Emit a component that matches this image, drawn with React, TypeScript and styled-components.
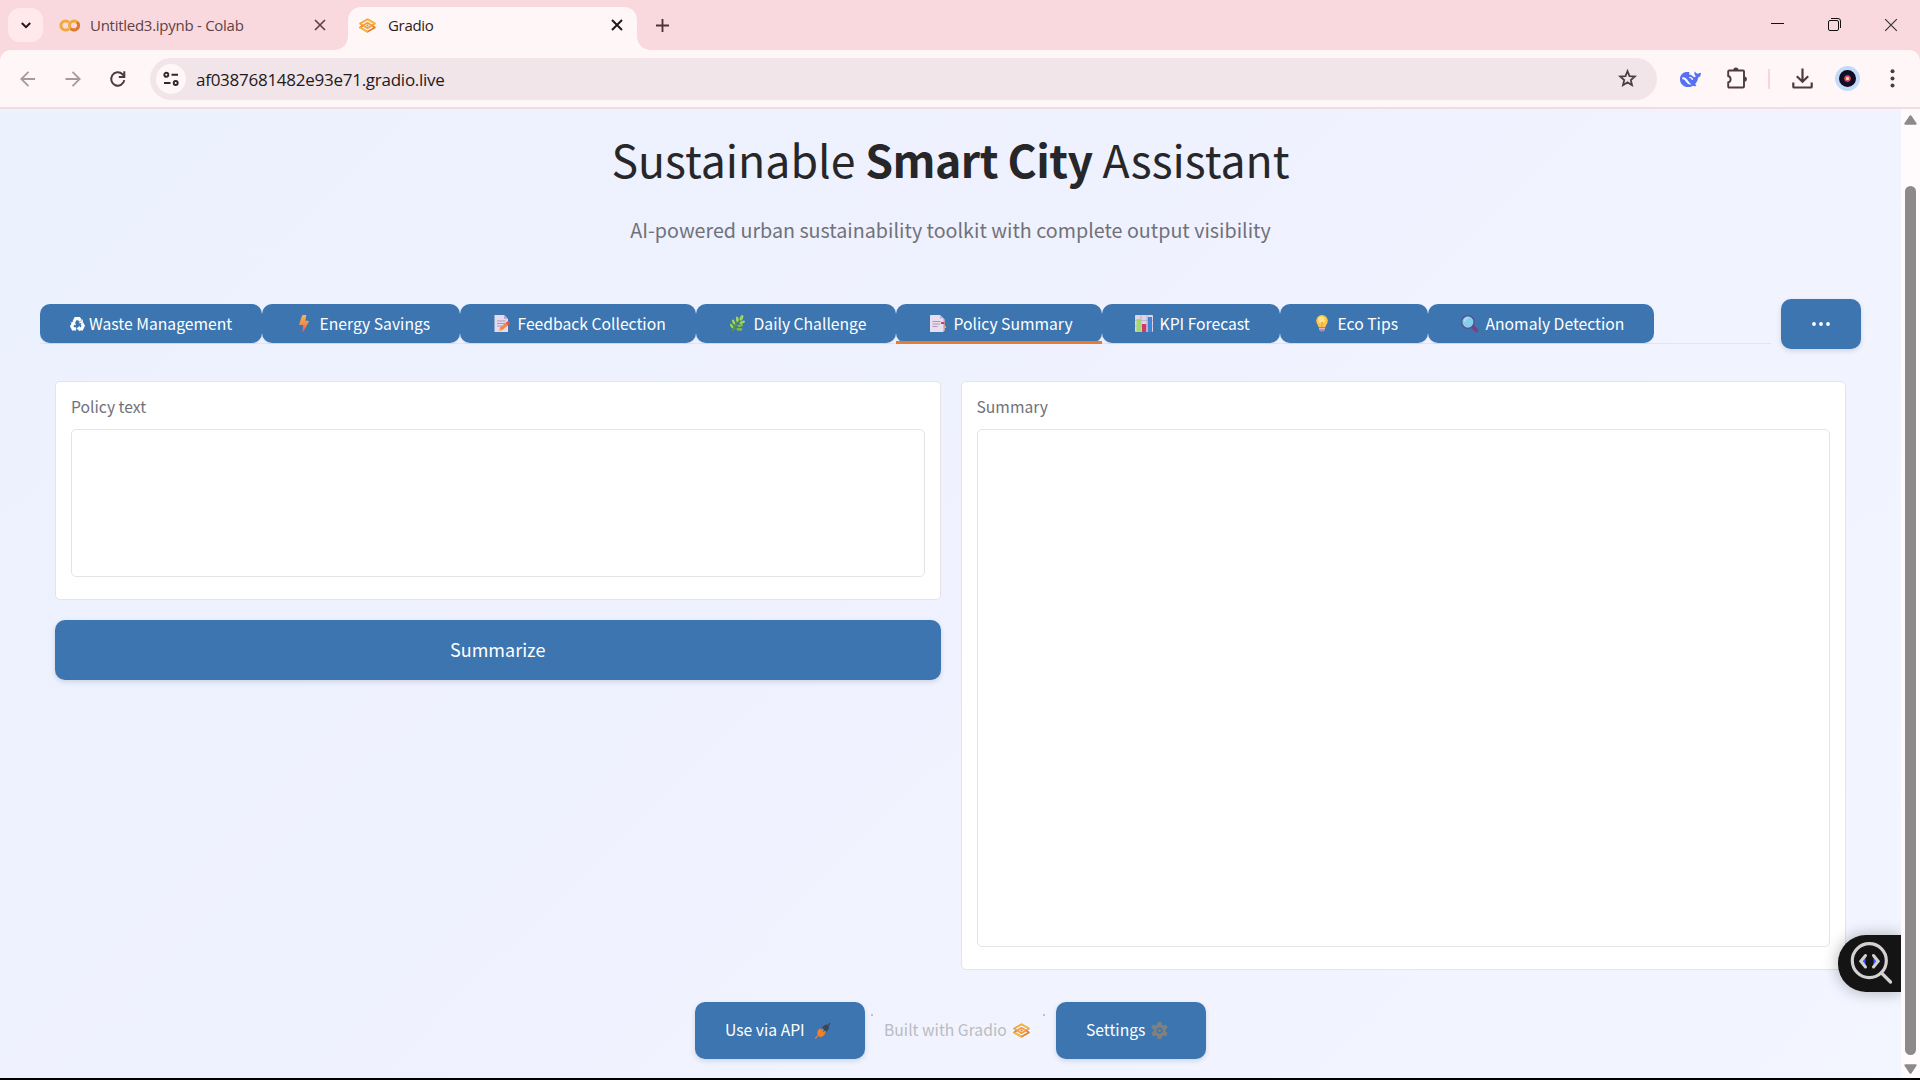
import React from "react";
import styled, { createGlobalStyle } from "styled-components";

const sans = `"Noto Sans CJK SC", "Open Sans", sans-serif`;
const ui = `"Open Sans", "Noto Sans", sans-serif`;

const GlobalStyle = createGlobalStyle`
  * { box-sizing: border-box; }
  html, body { margin: 0; padding: 0; background: #000; overflow: hidden; }
  body { font-family: ${sans}; }
  button { font: inherit; border: 0; padding: 0; margin: 0; background: none; color: inherit; }
  svg { display: block; flex: none; overflow: visible; }
`;

const Window = styled.div`
  width: 1920px;
  height: 1080px;
  padding-bottom: 2px;
  display: flex;
  flex-direction: column;
  background: #000;
`;

/* ---------- browser chrome ---------- */

const TabStrip = styled.div`
  flex: none;
  height: 50px;
  background: #fad9de;
  display: flex;
  align-items: flex-end;
  padding-left: 8px;
`;

const SearchTabs = styled.button`
  width: 35px;
  height: 34px;
  margin-bottom: 8px;
  border-radius: 12px;
  background: #ffe9ec;
  display: grid;
  place-items: center;
`;

const BrowserTab = styled.div<{ $active?: boolean; $width: number }>`
  width: ${(p) => p.$width}px;
  height: 43px;
  padding: 0 ${(p) => (p.$active ? 14 : 22)}px 7px ${(p) => (p.$active ? 11 : 17)}px;
  border-radius: 13px 13px 0 0;
  background: ${(p) => (p.$active ? "#fff6f7" : "transparent")};
  color: ${(p) => (p.$active ? "#2b1d20" : "#5c4347")};
  display: flex;
  align-items: center;
  gap: ${(p) => (p.$active ? 12 : 10)}px;
  position: relative;
  ${(p) =>
    p.$active &&
    `&::before, &::after {
      content: "";
      position: absolute;
      bottom: 0;
      width: 13px;
      height: 13px;
    }
    &::before { left: -13px; background: radial-gradient(circle at 0 0, transparent 12.5px, #fff6f7 13px); }
    &::after { right: -13px; background: radial-gradient(circle at 100% 0, transparent 12.5px, #fff6f7 13px); }`}
`;

const Text = styled.span<{ $size: number; $ls?: number; $ui?: boolean }>`
  font-family: ${(p) => (p.$ui ? ui : sans)};
  font-size: ${(p) => p.$size}px;
  letter-spacing: ${(p) => p.$ls ?? 0}px;
  line-height: 24px;
  white-space: pre;
`;

const TabTitle = styled(Text)`
  flex: 1;
`;

const NewTab = styled.button`
  width: 24px;
  height: 24px;
  margin: 0 0 13px 13px;
  display: grid;
  place-items: center;
`;

const WindowButtons = styled.div`
  margin-left: auto;
  height: 50px;
  padding: 0 22px 1px 0;
  display: flex;
  align-items: center;
  gap: 43.5px;
`;

const ToolbarBack = styled.div`
  flex: none;
  background: #fad9de;
`;

const Toolbar = styled.div`
  height: 59px;
  padding: 0 20px;
  border-radius: 11px 11px 0 0;
  border-bottom: 2px solid #f3dce0;
  background: #fff6f7;
  display: flex;
  align-items: center;
`;

const NavButtons = styled.div`
  width: 130px;
  display: flex;
  gap: 29px;
`;

const AddressBar = styled.div`
  width: 1507px;
  height: 42px;
  border-radius: 21px;
  background: #f1e5e9;
  display: flex;
  align-items: center;
  padding: 0 20px 0 6px;
`;

const SiteInfo = styled.button`
  width: 30px;
  height: 30px;
  border-radius: 50%;
  background: #fff6f7;
  display: grid;
  place-items: center;
`;

const Url = styled(Text)`
  flex: 1;
  margin-left: 10px;
  padding-top: 2px;
  color: #22191b;
`;

const Extensions = styled.div`
  flex: 1;
  padding-left: 23px;
  display: flex;
  align-items: center;
`;

const PuzzleSlot = styled.div`
  margin-left: 26px;
`;

const Divider = styled.i`
  width: 2px;
  height: 20px;
  margin: 0 22px 0 21px;
  background: #fad4da;
`;

const Avatar = styled.div`
  width: 25px;
  height: 25px;
  margin: 0 30px 0 22px;
  border-radius: 50%;
  border: 4px solid #c3dbf8;
  background: radial-gradient(circle, #ffd98a 0 1.2px, #e0456a 2px 2.8px, #14102a 3.8px, #07061a 100%);
`;

/* ---------- page ---------- */

const Viewport = styled.div`
  flex: 1;
  min-height: 0;
  display: flex;
`;

const Page = styled.main`
  width: 1901px;
  position: relative;
  background: linear-gradient(135deg, #ebf1fd 0%, #eff2fe 45%, #f1f4ff 65%, #f3f6ff 100%);
  display: flex;
  flex-direction: column;
`;

const ScrollBar = styled.div`
  width: 19px;
  background: #fffafb;
  display: flex;
  flex-direction: column;
  align-items: center;
  padding: 6px 0 4px 0;
`;

const Thumb = styled.div`
  width: 11px;
  height: 869px;
  margin: 61px 0 9px;
  border-radius: 6px;
  background: #8c898a;
`;

const Header = styled.header`
  height: 190px;
  display: flex;
  flex-direction: column;
  align-items: center;
  color: #27272a;
`;

const Title = styled.h1`
  margin: 20px 0 0;
  height: 60px;
  font-size: 44.6px;
  line-height: 60px;
  font-weight: 400;
  white-space: pre;
`;

const Strong = styled.strong`
  font-weight: 600;
  letter-spacing: -0.55px;
`;

const Subtitle = styled.p`
  margin: 26px 0 0;
  height: 30px;
  font-size: 19.7px;
  line-height: 30px;
  color: #71717a;
`;

const TabRow = styled.div`
  height: 50px;
  padding: 0 40px;
  display: flex;
  align-items: center;
  justify-content: space-between;
`;

const TabList = styled.div`
  width: 1731px;
  height: 40px;
  border-bottom: 1px solid #e4e4e9;
  display: flex;
`;

const Tab = styled.button<{ $width: number; $selected?: boolean }>`
  width: ${(p) => p.$width}px;
  height: 39px;
  padding-left: 30px;
  border-radius: 10px;
  background: #3c75b0;
  color: #fff;
  display: flex;
  align-items: center;
  position: relative;
  box-shadow: 0 1px 2px rgba(40, 60, 110, 0.1);
  clip-path: inset(0 0 -1px 0);
  ${(p) =>
    p.$selected &&
    `&::after {
      content: "";
      position: absolute;
      left: 0;
      right: 0;
      bottom: -1px;
      height: 3px;
      background: #ea7a2e;
    }`}
`;

const Emoji = styled.span<{ $width: number }>`
  width: ${(p) => p.$width}px;
  padding-right: 4px;
  display: grid;
  place-items: center;
`;

const ButtonLabel = styled(Text)`
  padding-bottom: 2px;
`;

const Button = styled.button<{ $width?: number; $height: number }>`
  width: ${(p) => (p.$width ? p.$width + "px" : "100%")};
  height: ${(p) => p.$height}px;
  border-radius: 10px;
  background: #3c75b0;
  color: #fff;
  box-shadow: 0 2px 5px rgba(30, 50, 90, 0.16);
  display: flex;
  align-items: center;
  justify-content: center;
`;

const FooterButton = styled(Button)<{ $gap: number }>`
  justify-content: flex-start;
  padding-left: 30px;
  gap: ${(p) => p.$gap}px;
`;

const Columns = styled.div`
  padding: 32px 55px 0;
  display: flex;
  align-items: flex-start;
  gap: 20px;
`;

const Column = styled.div`
  flex: 1;
  display: flex;
  flex-direction: column;
  gap: 20px;
`;

const Panel = styled.section<{ $height: number }>`
  height: ${(p) => p.$height}px;
  padding: 13px 15px 22px;
  border: 1px solid #e4e4e7;
  border-radius: 5px;
  background: #fff;
  color: #71717a;
  display: flex;
  flex-direction: column;
`;

const Field = styled.div`
  flex: 1;
  margin-top: 10px;
  border: 1px solid #e4e4e7;
  border-radius: 5px;
`;

const Footer = styled.footer`
  margin-top: 32px;
  height: 57px;
  display: flex;
  justify-content: center;
`;

const FooterDot = styled.i<{ $before: number; $after: number }>`
  width: 2px;
  height: 2px;
  margin: 12px ${(p) => p.$after}px 0 ${(p) => p.$before}px;
  background: #c0c0c6;
`;

const BuiltWith = styled.div`
  width: 146px;
  color: #bbbbc1;
  display: flex;
  align-items: center;
  justify-content: space-between;
`;

const Inspector = styled.div`
  position: absolute;
  right: 0;
  top: 826px;
  width: 63px;
  height: 57px;
  padding: 7px 0 0 12px;
  border-radius: 28px 0 0 28px;
  background: #141414;
  box-shadow: 0 0 16px rgba(0, 0, 0, 0.3);
`;

const Clip = styled.div`
  position: absolute;
  inset: 0;
  overflow: hidden;
  pointer-events: none;
`;

/* ---------- drawings ---------- */

const GradioLogo = ({ w, h }: { w: number; h: number }) => (
  <svg width={w} height={h} viewBox="0 0 20 18" fill="none" strokeLinejoin="round" preserveAspectRatio="none">
    <path d="M4.600 8.900 1.300 6.700 10 1.500l8.700 5.200-3.300 2.200" stroke="#f0a63a" strokeWidth="2.200" />
    <path d="M4.600 9.100 1.300 11.300 10 16.500l8.700-5.200-3.300-2.200" stroke="#e9822e" strokeWidth="2.200" />
    <path d="M1.300 11.300 10 16.500M10 1.500l8.700 5.200" stroke="#f3bb45" strokeWidth="2.200" />
    <path d="M4.800 9 10 5.800 15.200 9 10 12.200z" stroke="#f0a03a" strokeWidth="2" />
    <circle cx="10" cy="9" r="1.300" fill="#e9822e" />
  </svg>
);

const Cross = ({ size, color, width }: { size: number; color: string; width: number }) => (
  <svg width={size} height={size} viewBox="0 0 12 12" fill="none" stroke={color} strokeWidth={width}>
    <path d="M1 1l10 10M11 1 1 11" />
  </svg>
);

const Recycle = () => (
  <svg width="15" height="15" viewBox="0 0 24 24" fill="none" stroke="#fff" strokeWidth="5">
    <path d="M6.2 9.4 9 4.2h5.5l2.3 3.6" />
    <path d="M19 11.5l2.2 4-2.4 5h-4.6" />
    <path d="M9.8 20.5H5l-2.2-4 2.4-4.3" />
    <path d="M20.5 5v6.6h-6.8zM15.6 15.5v9l-5-4.4zM.8 10.8 7.6 8l1.8 7z" fill="#fff" stroke="none" />
  </svg>
);

const Bolt = () => (
  <svg width="10" height="17" viewBox="0 0 10 17">
    <defs>
      <linearGradient id="bolt" x1="0" y1="0" x2="0" y2="1">
        <stop offset="0" stopColor="#f9b84a" />
        <stop offset="0.55" stopColor="#f08a4c" />
        <stop offset="1" stopColor="#e4536a" />
      </linearGradient>
    </defs>
    <path d="M3 .8Q3.300 0 4 0h2.700q.8 0 .6.800L6.300 5.800h2.900q1 0 .6 1L4.600 16.500q-.4.700-.9.400-.5-.2-.3-.9L4.300 10H.8Q-.1 10 .1 9.200z" fill="url(#bolt)" />
  </svg>
);

const Memo = () => (
  <svg width="16" height="17" viewBox="0 0 16 17">
    <path d="M.5 0H10l4 4v13H.5z" fill="#e6dbee" />
    <path d="M10 0l4 4h-4z" fill="#bcaacb" />
    <path d="M3 6h8.500M3 8.500h8M3 11h5" stroke="#a997ba" strokeWidth="1" />
    <path d="M4.500 16.200l1-3.200 6-5 2.300 2.500-6 5z" fill="#ef8a45" />
    <path d="M11.500 8l1.700-1.400q1.300-.7 2.200.4t-.1 2.200l-1.500 1.300z" fill="#e4545c" />
    <path d="M4.500 16.200l1-3.200 2.300 2.500z" fill="#f3c08b" />
  </svg>
);

const Herb = () => (
  <svg width="15" height="17" viewBox="0 0 15 17">
    <path d="M2.500 16.500Q4.500 9 12 2M4 12.500l-2-3M5 11l3-.5M4 14l6-1" stroke="#5d9b3c" strokeWidth="1.200" fill="none" />
    <g fill="#a5d653">
      <ellipse cx="11.500" cy="2.800" rx="1.600" ry="3" transform="rotate(25 11.500 2.800)" />
      <ellipse cx="7.300" cy="4.200" rx="1.400" ry="2.800" transform="rotate(-8 7.300 4.200)" />
      <ellipse cx="3.600" cy="7" rx="1.300" ry="2.700" transform="rotate(-25 3.600 7)" />
      <ellipse cx="12.300" cy="7.200" rx="2.900" ry="1.400" transform="rotate(-20 12.300 7.200)" />
      <ellipse cx="1.600" cy="11" rx="1.200" ry="2.500" transform="rotate(-30 1.600 11)" />
    </g>
    <g fill="#80bd42">
      <ellipse cx="10.300" cy="10.500" rx="2.900" ry="1.400" transform="rotate(-12 10.300 10.500)" />
      <ellipse cx="9.500" cy="14.400" rx="3" ry="1.400" />
    </g>
  </svg>
);

const BookmarkTabs = () => (
  <svg width="16" height="17" viewBox="0 0 16 17">
    <path d="M3 1h8l4 3.500V16H3z" fill="#b39fbf" />
    <path d="M0 .5Q0 0 .5 0H10l3.500 3.500V17H.5Q0 17 0 16.500z" fill="#e9def0" />
    <path d="M10 0l3.500 3.500H10z" fill="#c2b2d0" />
    <path d="M2.500 6.500h8M2.500 9h7.500M2.500 11.500h5" stroke="#a997ba" strokeWidth="1" />
    <path d="M11 7h3.300v2H11z" fill="#d6386f" />
    <path d="M13.500 11H16v2h-2.500z" fill="#e9b13a" />
  </svg>
);

const Chart = () => (
  <svg width="18" height="17" viewBox="0 0 18 17">
    <rect width="18" height="17" rx="1" fill="#dfd3e6" />
    <path d="M0 5.500h18M0 11h18M6 0v17M12 0v17" stroke="#b9a9c6" strokeWidth=".8" />
    <rect x="1.500" y="4" width="4.200" height="13" fill="#9fdc63" />
    <rect x="7" y="9" width="4.200" height="8" fill="#cf3a68" />
    <rect x="12.800" y="2" width="4.200" height="15" fill="#3f86d8" />
  </svg>
);

const Bulb = () => (
  <svg width="12" height="17" viewBox="0 0 12 17">
    <path d="M6 0a5.700 5.700 0 0 1 5.800 5.800c0 2.700-1.700 3.600-2.400 6.400H2.600C1.900 9.400.2 8.500.2 5.800A5.700 5.700 0 0 1 6 0z" fill="#fbc54a" />
    <ellipse cx="5.600" cy="5" rx="3.300" ry="3.500" fill="#fde68a" />
    <path d="M5 7l1 1.500L7 7M6 8.500v3.500" stroke="#ef9a3a" strokeWidth="1" fill="none" />
    <path d="M3 12.200h6v2.600L7.800 16.500H4.200L3 14.800z" fill="#a88bb5" />
    <path d="M3 13.700h6" stroke="#d7c7dd" strokeWidth="1" />
  </svg>
);

const Glass = () => (
  <svg width="17" height="17" viewBox="0 0 17 17">
    <path d="M10.500 10.500l5 5" stroke="#7d3f7e" strokeWidth="3.400" strokeLinecap="round" />
    <ellipse cx="6.900" cy="7" rx="6.200" ry="6.300" fill="#84d0ea" stroke="#5a4a8e" strokeWidth="1.300" />
    <path d="M3.500 6Q4.200 3.300 7 3" stroke="#b5e8f6" strokeWidth="1.200" fill="none" strokeLinecap="round" />
  </svg>
);

const Plug = () => (
  <svg width="15" height="16" viewBox="0 0 15 16">
    <path d="M7 4.500l2.500-2.300q2-1.300 3.700.2t.3 3.800L11 9z" fill="#3f4551" />
    <path d="M13 2.600 15 .3" stroke="#3f4551" strokeWidth="1.300" />
    <path d="M2.800 7.500 5 5.300l5.300 5.500-2.500 2.400q-2.300 1.500-4.300-.2t-.7-5.500z" fill="#f07f2e" />
    <path d="M2.800 12.600.3 15.600M6.300 8l2-2M8.500 10.200l2-2" stroke="#f07f2e" strokeWidth="1.300" />
  </svg>
);

const Gear = () => (
  <svg width="17" height="17" viewBox="0 0 24 24" fill="#808080" fillRule="evenodd">
    <path d="M9.300 0h5.400l.6 3.700 2 1.100L20.900 3.500l2.700 4.700-3 2.400v2.800l3 2.400-2.700 4.700-3.600-1.300-2 1.100-.6 3.700H9.300l-.6-3.700-2-1.100-3.600 1.300-2.700-4.700 3-2.400v-2.800l-3-2.400 2.700-4.700 3.600 1.300 2-1.100zM12 7.600a4.400 4.400 0 1 0 0 8.800 4.400 4.400 0 0 0 0-8.800zm0 2.200a2.200 2.200 0 1 1 0 4.400 2.200 2.200 0 0 1 0-4.400z" />
  </svg>
);

const Whale = () => (
  <svg width="21" height="16" viewBox="0 0 21 16">
    <path d="M9.500 1.200C4 .2 0 3 0 8.200 0 12.800 3.500 16 8 16c2.200 0 3.800-.6 4.900-1.300 1.500.6 2.700.5 3.500.1-.4-.8-.9-1.200-1.300-1.800 1.900-1.800 2.800-4.200 2.900-6.200C20 6 21 4.200 20.900 1.700 19.600 1.300 18.300 3 17.300 2.700 16.300 2.300 15.600 1.500 14.700.2c-.7 2-.3 3.700 1.100 5.100-.9 1.300-1.900.9-2.600.2C11.500 4 10.500 3.300 9 3.400" fill="#5570f2" />
    <path d="M2.300 6.200c2.600-.4 4.300 1.300 5.600 3.300 1.200 1.900 2.200 3.200 3.700 3.700-2 .9-3.700.1-5-1.600C5.300 9.900 4.600 8 2.300 8.300z" fill="#fff6f7" />
    <path d="M9.300 6.300c1.700 0 3 1 3.300 2.600" stroke="#fff6f7" strokeWidth="1.300" fill="none" />
  </svg>
);

const tabs = [
  { icon: <Recycle />, slot: 19, label: "Waste Management", width: 222 },
  { icon: <Bolt />, slot: 27.5, label: "Energy Savings", width: 198 },
  { icon: <Memo />, slot: 27.5, label: "Feedback Collection", width: 236 },
  { icon: <Herb />, slot: 27.5, label: "Daily Challenge", width: 200 },
  { icon: <BookmarkTabs />, slot: 27.5, label: "Policy Summary", width: 206, selected: true },
  { icon: <Chart />, slot: 27.5, label: "KPI Forecast", width: 178 },
  { icon: <Bulb />, slot: 27.5, label: "Eco Tips", width: 148 },
  { icon: <Glass />, slot: 27.5, label: "Anomaly Detection", width: 226 },
];

export default function App() {
  return (
    <>
      <GlobalStyle />
      <Window>
        <TabStrip>
          <SearchTabs>
            <svg width="10" height="7" viewBox="0 0 10 7" fill="none" stroke="#22191b" strokeWidth="2">
              <path d="M.8 1 5 5.200 9.200 1" />
            </svg>
          </SearchTabs>
          <BrowserTab $width={305}>
            <svg width="20" height="13" viewBox="0 0 20 13" fill="none" strokeWidth="3">
              <path d="M8.800 3.300A4.600 4.600 0 1 0 8.800 9.700" stroke="#f0a93b" />
              <circle cx="14" cy="6.500" r="4.500" stroke="#f0a93b" />
              <path d="M10.800 9.700A4.500 4.500 0 0 0 17.200 3.300" stroke="#dd7636" />
            </svg>
            <TabTitle $ui $size={15} $ls={-0.27}>Untitled3.ipynb - Colab</TabTitle>
            <Cross size={12} color="#5c4347" width={1.7} />
          </BrowserTab>
          <BrowserTab $active $width={289}>
            <GradioLogo w={17} h={15} />
            <TabTitle $ui $size={15} $ls={-0.3}>Gradio</TabTitle>
            <Cross size={12} color="#22191b" width={2} />
          </BrowserTab>
          <NewTab>
            <svg width="13" height="13" viewBox="0 0 14 14" stroke="#4a3438" strokeWidth="2">
              <path d="M7 0v14M0 7h14" />
            </svg>
          </NewTab>
          <WindowButtons>
            <svg width="13" height="13" viewBox="0 0 13 13" stroke="#111" strokeWidth="1">
              <path d="M0 5.500h13" />
            </svg>
            <svg width="13" height="13" viewBox="0 0 13 13" fill="none" stroke="#111" strokeWidth="1">
              <rect x=".5" y="2.500" width="10" height="10" rx="1.500" />
              <path d="M3 .5h7a2.500 2.500 0 0 1 2.500 2.500v7" />
            </svg>
            <Cross size={14} color="#333" width={1} />
          </WindowButtons>
        </TabStrip>

        <ToolbarBack>
          <Toolbar>
            <NavButtons>
              <svg width="16" height="16" viewBox="0 0 16 16" fill="none" stroke="#a8999c" strokeWidth="1.800">
                <path d="M8.500.8 1.300 8l7.200 7.200M1.500 8H15" />
              </svg>
              <svg width="16" height="16" viewBox="0 0 16 16" fill="none" stroke="#a8999c" strokeWidth="1.800">
                <path d="M7.500.8 14.700 8l-7.200 7.200M14.500 8H.5" />
              </svg>
              <svg width="16" height="16" viewBox="0 0 16 16" fill="none" stroke="#4f3b3f" strokeWidth="2">
                <path d="M14.300 9.200A6.600 6.800 0 1 1 12.500 3.200L14.300 5.400M14.300 .2v5.800H8.800" />
              </svg>
            </NavButtons>
            <AddressBar>
              <SiteInfo>
                <svg width="16" height="14" viewBox="0 0 16 14" fill="none" stroke="#33272a" strokeWidth="1.900">
                  <circle cx="3.300" cy="2.800" r="2" />
                  <path d="M8.500 2.800H15M1 11h6.500" />
                  <circle cx="12.700" cy="11" r="2" />
                </svg>
              </SiteInfo>
              <Url $ui $size={17} $ls={-0.26}>af0387681482e93e71.gradio.live</Url>
              <svg width="19" height="19" viewBox="0 0 19 19" fill="none" stroke="#4f3f43" strokeWidth="1.800">
                <path d="M9.500 2.200l2 4.900 5.300.4-4 3.500 1.200 5.200-4.500-2.800L5 16.200 6.200 11l-4-3.500 5.300-.4z" />
              </svg>
            </AddressBar>
            <Extensions>
              <Whale />
              <PuzzleSlot>
                <svg width="20" height="21" viewBox="0 0 20 21" fill="none" stroke="#4f3b3f" strokeWidth="1.900">
                  <path d="M1.200 3.500q0-1 1-1H16q1 0 1 1V18.500q0 1-1 1H2.200q-1 0-1-1V14.500a3.400 3.400 0 0 0 0-6.500z" />
                  <path d="M6.300 2.200a2.600 2.600 0 0 1 5.200 0zM17.300 8.500a2.600 2.600 0 0 1 0 5.200z" fill="#4f3b3f" stroke="none" />
                </svg>
              </PuzzleSlot>
              <Divider />
              <svg width="21" height="21" viewBox="0 0 21 21" fill="none" stroke="#4f3b3f" strokeWidth="2.200">
                <path d="M10.500.5v13M4.800 8.200l5.700 5.600 5.700-5.600" />
                <path d="M1.300 14.500v4.200q0 .8.800.8h16.800q.8 0 .8-.8v-4.200" />
              </svg>
              <Avatar />
              <svg width="5" height="19" viewBox="0 0 5 19" fill="#4f3b3f">
                <circle cx="2.500" cy="2.200" r="2" />
                <circle cx="2.500" cy="9.500" r="2" />
                <circle cx="2.500" cy="16.500" r="2" />
              </svg>
            </Extensions>
          </Toolbar>
        </ToolbarBack>

        <Viewport>
          <Page>
            <Header>
              <Title>Sustainable <Strong>Smart City</Strong> Assistant</Title>
              <Subtitle>AI-powered urban sustainability toolkit with complete output visibility</Subtitle>
            </Header>
            <TabRow>
              <TabList>
                {tabs.map((t) => (
                  <Tab key={t.label} $width={t.width} $selected={t.selected}>
                    <Emoji $width={t.slot}>{t.icon}</Emoji>
                    <Text $size={15.7}>{t.label}</Text>
                  </Tab>
                ))}
              </TabList>
              <Button $width={80} $height={50}>
                <svg width="18" height="4" viewBox="0 0 18 4" fill="#fff">
                  <circle cx="2" cy="2" r="1.900" />
                  <circle cx="9" cy="2" r="1.900" />
                  <circle cx="16" cy="2" r="1.900" />
                </svg>
              </Button>
            </TabRow>
            <Columns>
              <Column>
                <Panel $height={219}>
                  <Text $size={15.7}>Policy text</Text>
                  <Field />
                </Panel>
                <Button $height={60}>
                  <ButtonLabel $size={18}>Summarize</ButtonLabel>
                </Button>
              </Column>
              <Column>
                <Panel $height={589}>
                  <Text $size={15.7}>Summary</Text>
                  <Field />
                </Panel>
              </Column>
            </Columns>
            <Footer>
              <FooterButton $width={170} $height={57} $gap={10}>
                <ButtonLabel $size={15.7}>Use via API</ButtonLabel>
                <Plug />
              </FooterButton>
              <FooterDot $before={6} $after={11} />
              <BuiltWith>
                <ButtonLabel $size={15.7}>Built with Gradio</ButtonLabel>
                <GradioLogo w={17} h={15} />
              </BuiltWith>
              <FooterDot $before={13} $after={11} />
              <FooterButton $width={150} $height={57} $gap={6}>
                <ButtonLabel $size={15.7}>Settings</ButtonLabel>
                <Gear />
              </FooterButton>
            </Footer>
            <Clip>
              <Inspector>
                <svg width="43" height="43" viewBox="0 0 43 43" fill="none" stroke="#d5d1d1" strokeWidth="3.200" strokeLinecap="round">
                  <circle cx="19.300" cy="18.700" r="17" />
                  <path d="M31.500 31l9 9" />
                  <path d="M15.500 15v9l-4-4.500zM23.500 15v9l4-4.500z" fill="#2f5bff" stroke="none" />
                  <path d="M15.500 13.500 10.800 19.300l4.700 5.700M23.500 13.500l4.700 5.800-4.700 5.700" strokeWidth="3" />
                </svg>
              </Inspector>
            </Clip>
          </Page>
          <ScrollBar>
            <svg width="13" height="10" viewBox="0 0 13 10" fill="#8c898a">
              <path d="M5.500.8q1-1.200 2 0l5 7.400q.6 1.400-.8 1.600H1.300Q-.1 9.600.5 8.200z" />
            </svg>
            <Thumb />
            <svg width="13" height="10" viewBox="0 0 13 10" fill="#8c898a">
              <path d="M5.500 9.200q1 1.200 2 0l5-7.400Q13.100.4 11.700.2H1.300Q-.1.4.5 1.800z" />
            </svg>
          </ScrollBar>
        </Viewport>
      </Window>
    </>
  );
}
